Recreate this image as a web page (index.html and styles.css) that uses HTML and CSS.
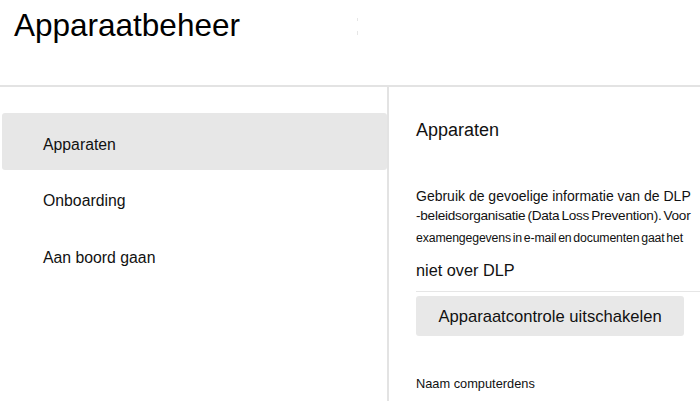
FILE: index.html
```html
<!DOCTYPE html>
<html lang="nl">
<head>
<meta charset="utf-8">
<link rel="stylesheet" href="styles.css">
</head>
<body>
<header class="header">
  <h1 class="title">Apparaatbeheer</h1>
  <span class="tick"></span>
</header>
<div class="main">
  <nav class="nav">
    <div class="nav-item selected">Apparaten</div>
    <div class="nav-item">Onboarding</div>
    <div class="nav-item">Aan boord gaan</div>
  </nav>
  <section class="content">
    <h2 class="heading">Apparaten</h2>
    <p class="desc">
      <span class="l1">Gebruik de gevoelige informatie van de DLP</span>
      <span class="l2">-beleidsorganisatie (Data Loss Prevention). Voor</span>
      <span class="l3">examengegevens in e-mail en documenten gaat het</span>
      <span class="l4">niet over DLP</span>
    </p>
    <button class="btn">Apparaatcontrole uitschakelen</button>
    <div class="label">Naam computerdens</div>
  </section>
</div>
</body>
</html>
```
FILE: styles.css
```css
* { box-sizing: border-box; }
html, body { margin: 0; padding: 0; }
body {
  width: 700px;
  height: 401px;
  overflow: hidden;
  background: #fff;
  color: #111;
  font-family: "Liberation Sans", Arial, sans-serif;
}
.header {
  height: 87px;
  border-bottom: 2px solid #e3e3e3;
  display: flex;
  align-items: flex-start;
  padding-left: 14px;
}
.title {
  margin: 6px 0 0 0;
  font-weight: normal;
  font-size: 31.5px;
  line-height: 38px;
  color: #000;
}
.tick {
  width: 1px;
  height: 17px;
  margin: 18px 0 0 117px;
  background: linear-gradient(#e6e6e6 0 3px, transparent 3px 13px, #e6e6e6 13px);
}
.main {
  display: flex;
  height: 314px;
}
.nav {
  flex: 0 0 389px;
  border-right: 2px solid #e3e3e3;
  padding: 26px 0 0 2px;
  display: flex;
  flex-direction: column;
}
.nav-item {
  height: 56.5px;
  display: flex;
  align-items: center;
  padding: 6px 0 0 41px;
  font-size: 15.8px;
  border-radius: 3px;
}
.nav-item.selected { background: #e7e7e7; height: 57px; }
.content {
  flex: 1;
  padding: 33.4px 0 0 27px;
  display: flex;
  flex-direction: column;
}
.heading {
  margin: 0;
  font-weight: normal;
  font-size: 18px;
  line-height: 20px;
}
.desc {
  margin: 45.5px 0 0 0;
  display: flex;
  flex-direction: column;
}
.desc span { display: block; white-space: nowrap; }
.l1 { font-size: 14px; line-height: 20px; }
.l2 { font-size: 13.6px; line-height: 20px; letter-spacing: -0.25px; word-spacing: -1.5px; }
.l3 { font-size: 12.3px; line-height: 24.7px; letter-spacing: -0.15px; word-spacing: -1.5px; }
.l4 {
  margin-top: 7.7px;
  font-size: 16.3px;
  line-height: 24px;
  padding-bottom: 8.7px;
  border-bottom: 1px solid #e6e6e6;
}
.btn {
  margin-top: 4px;
  width: 268px;
  height: 40.5px;
  border: none;
  border-radius: 3px;
  background: #e8e8e8;
  font-family: "Liberation Sans", Arial, sans-serif;
  font-size: 16.6px;
  color: #111;
  padding: 1px 0 0 0;
}
.label {
  margin-top: 39.3px;
  font-size: 12.8px;
  line-height: 16px;
}
```
